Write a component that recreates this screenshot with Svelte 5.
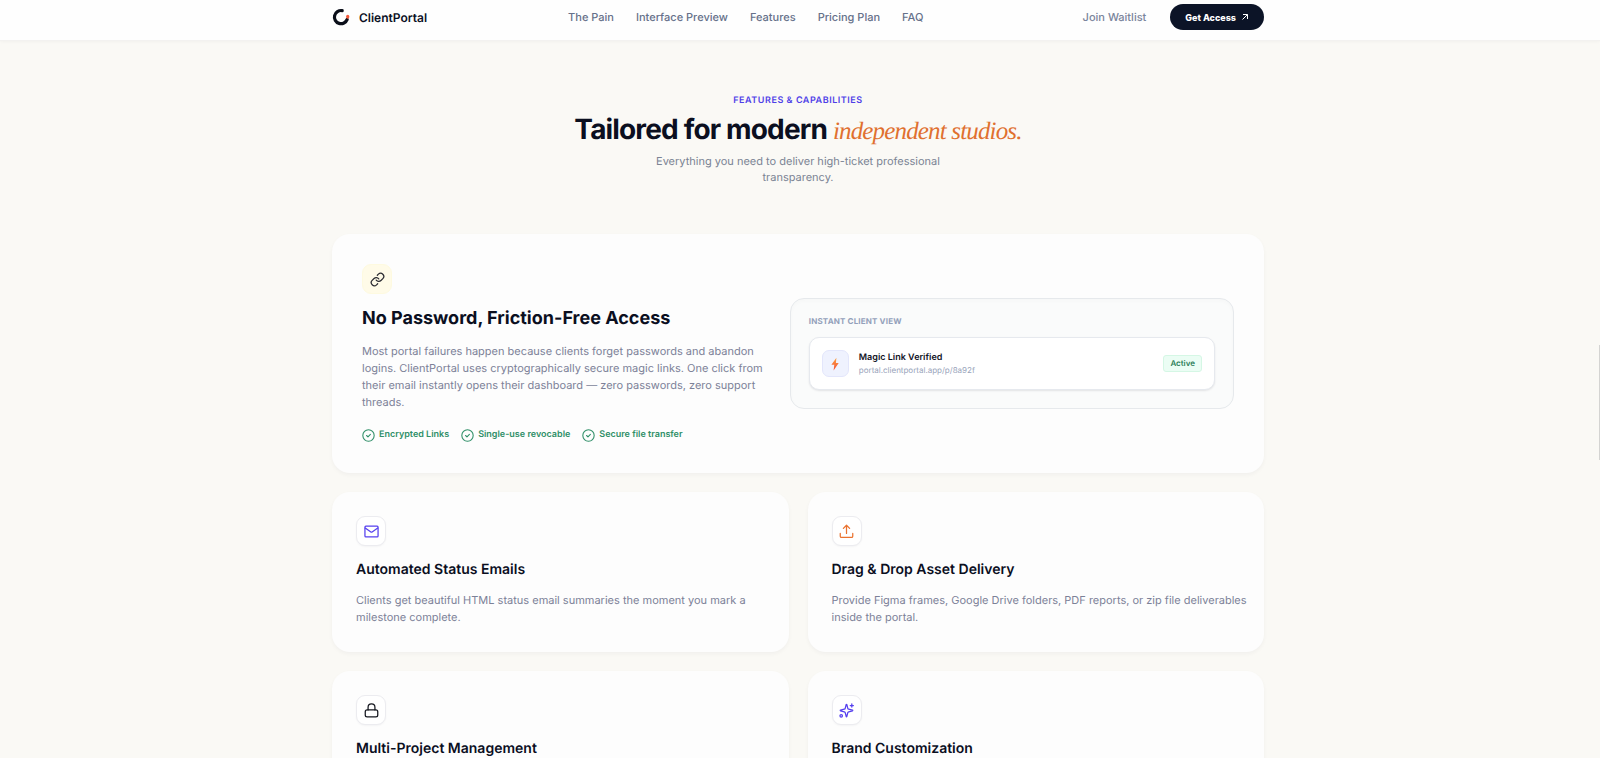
<script lang="ts">
  type Icon = 'mail' | 'upload' | 'lock' | 'sparkles';

  const navLinks = ['The Pain', 'Interface Preview', 'Features', 'Pricing Plan', 'FAQ'];
  const perks = ['Encrypted Links', 'Single-use revocable', 'Secure file transfer'];

  const features: { icon: Icon; title: string; text?: string }[] = [
    {
      icon: 'mail',
      title: 'Automated Status Emails',
      text: 'Clients get beautiful HTML status email summaries the moment you mark a milestone complete.',
    },
    {
      icon: 'upload',
      title: 'Drag & Drop Asset Delivery',
      text: 'Provide Figma frames, Google Drive folders, PDF reports, or zip file deliverables inside the portal.',
    },
    { icon: 'lock', title: 'Multi-Project Management' },
    { icon: 'sparkles', title: 'Brand Customization' },
  ];
</script>

<div class="page">
  <header class="topbar">
    <div class="container topbar-inner">
      <a class="brand" href="#top">
        <svg width="18" height="18" viewBox="0 0 18 18" fill="none" stroke-width="3.2" stroke-linecap="round">
          <path d="M10.200 2.600A6.600 6.600 0 1 0 15.200 11.400" stroke="#0b0f1a" />
          <path d="M15.700 8.300v.8" stroke="#f4593a" />
        </svg>
        <span>ClientPortal</span>
      </a>
      <nav>
        {#each navLinks as label}
          <a href="#{label.toLowerCase().replaceAll(' ', '-')}">{label}</a>
        {/each}
      </nav>
      <div class="actions">
        <a href="#waitlist">Join Waitlist</a>
        <button class="cta" type="button">
          Get Access
          <svg width="8" height="8" viewBox="0 0 8 8" fill="none" stroke="currentColor" stroke-width="1">
            <path d="M1.5 6.5l5-5M2 1.5h4.5V6" />
          </svg>
        </button>
      </div>
    </div>
  </header>

  <main class="container">
    <div class="intro">
      <p class="eyebrow">Features &amp; Capabilities</p>
      <h2>Tailored for modern <em>independent studios.</em></h2>
      <p class="lead">Everything you need to deliver high-ticket professional transparency.</p>
    </div>

    <div class="grid">
      <section class="card wide">
        <div>
          <div class="icon-box cream">
            <svg class="icon" viewBox="0 0 24 24">
              <path d="M10 13a5 5 0 0 0 7.54.54l3-3a5 5 0 0 0-7.07-7.07l-1.72 1.71" />
              <path d="M14 11a5 5 0 0 0-7.54-.54l-3 3a5 5 0 0 0 7.07 7.07l1.71-1.71" />
            </svg>
          </div>
          <h3>No Password, Friction-Free Access</h3>
          <p class="text">
            Most portal failures happen because clients forget passwords and abandon logins. ClientPortal uses
            cryptographically secure magic links. One click from their email instantly opens their dashboard — zero
            passwords, zero support threads.
          </p>
          <ul class="perks">
            {#each perks as perk}
              <li>
                <svg width="13" height="13" viewBox="0 0 24 24" fill="none" stroke="currentColor" stroke-width="2" stroke-linecap="round" stroke-linejoin="round">
                  <circle cx="12" cy="12" r="10.5" />
                  <path d="M8.5 12l2.5 2.5 4.5-4.5" />
                </svg>
                {perk}
              </li>
            {/each}
          </ul>
        </div>

        <div class="preview">
          <p class="preview-label">Instant Client View</p>
          <div class="link-card">
            <div class="bolt">
              <svg width="8" height="14" viewBox="0 0 8 14">
                <defs>
                  <linearGradient id="bolt-fill" x1="0" y1="0" x2="0" y2="1">
                    <stop offset="0" stop-color="#fba13c" />
                    <stop offset="1" stop-color="#f4503c" />
                  </linearGradient>
                </defs>
                <path d="M5.400.8L.4 7.800h2.900L2.600 13.400l5.100-7.400H4.900z" fill="url(#bolt-fill)" />
              </svg>
            </div>
            <div class="link-info">
              <strong>Magic Link Verified</strong>
              <span>portal.clientportal.app/p/8a92f</span>
            </div>
            <span class="badge">Active</span>
          </div>
        </div>
      </section>

      {#each features as feature}
        <section class="card">
          <div class="icon-box {feature.icon}">
            <svg class="icon" viewBox="0 0 24 24">
              {#if feature.icon === 'mail'}
                <rect x="1.5" y="3.5" width="21" height="17" rx="1.5" />
                <path d="M22 6.500l-8.970 6.200a1.940 1.940 0 0 1-2.060 0L2 6.500" />
              {:else if feature.icon === 'upload'}
                <path d="M22 15v4.500a2 2 0 0 1-2 2H4a2 2 0 0 1-2-2V15" />
                <path d="M17 7l-5-5-5 5M12 2v13" />
              {:else if feature.icon === 'lock'}
                <rect x="2" y="11" width="20" height="11" rx="3" />
                <path d="M6.500 11V7a5.500 5.500 0 0 1 11 0v4" />
              {:else}
                <path d="M9.940 15.500A2 2 0 0 0 8.500 14.060l-6.140-1.580a.5.5 0 0 1 0-.96L8.500 9.940A2 2 0 0 0 9.940 8.500l1.580-6.140a.5.5 0 0 1 .96 0L14.060 8.500A2 2 0 0 0 15.500 9.940l6.140 1.580a.5.5 0 0 1 0 .96L15.500 14.060a2 2 0 0 0-1.440 1.440l-1.580 6.140a.5.5 0 0 1-.96 0z" />
                <path d="M20.500 1.500v5M23 4h-5" />
                <circle cx="3.500" cy="20.500" r="2" />
              {/if}
            </svg>
          </div>
          <h4>{feature.title}</h4>
          {#if feature.text}
            <p class="text">{feature.text}</p>
          {/if}
        </section>
      {/each}
    </div>
  </main>

  <div class="scroll-thumb"></div>
</div>

<style>
  :global(body) {
    background: #faf9f5;
  }

  .page {
    position: relative;
    height: 100vh;
    overflow: hidden;
    font-family: Inter, 'Liberation Sans', sans-serif;
    font-size: 11px;
    color: #0b0f1f;
    text-rendering: geometricPrecision;
  }

  h2, h3, h4, p, ul {
    margin: 0;
  }

  a {
    color: inherit;
    text-decoration: none;
  }

  .container {
    width: calc(100% - 48px);
    max-width: 932px;
    margin: 0 auto;
  }

  .topbar {
    padding: 4px 4px 10px 0;
    background: #fefefe;
    border-bottom: 1px solid #f3f2f0;
    box-shadow: 0 1px 3px rgba(15, 23, 42, 0.03);
  }

  .topbar-inner {
    display: flex;
    align-items: center;
  }

  .brand {
    display: flex;
    align-items: center;
    gap: 9px;
    font-size: 12px;
    font-weight: 600;
  }

  nav {
    display: flex;
    gap: 22px;
    margin-left: 141px;
    font-weight: 500;
    color: #66718a;
  }

  .actions {
    display: flex;
    align-items: center;
    gap: 24px;
    margin-left: auto;
    font-weight: 500;
    color: #7a859c;
  }

  .cta {
    display: flex;
    align-items: center;
    gap: 5px;
    height: 26px;
    padding: 0 15px;
    border: none;
    border-radius: 13px;
    background: #0c1427;
    color: #fff;
    font-family: inherit;
    font-size: 9px;
    font-weight: 800;
    cursor: pointer;
  }

  main {
    padding: 53px 4px 0 0;
  }

  .intro {
    display: flex;
    flex-direction: column;
    align-items: center;
    text-align: center;
  }

  .eyebrow {
    font-size: 9px;
    font-weight: 600;
    line-height: 14px;
    text-transform: uppercase;
    letter-spacing: 0.06em;
    color: #4f3fe8;
  }

  h2 {
    margin-top: 3px;
    font-size: 28px;
    font-weight: 700;
    line-height: 36px;
    letter-spacing: -0.03em;
  }

  h2 em {
    font-family: 'Liberation Serif', serif;
    font-size: 25px;
    font-weight: 400;
    color: #e0702f;
  }

  .lead {
    max-width: 300px;
    margin-top: 3px;
    line-height: 16px;
    color: #7b8494;
  }

  .grid {
    display: grid;
    grid-template-columns: 1fr 1fr;
    gap: 19px;
    margin-top: 49px;
  }

  .card {
    min-height: 111px;
    padding: 24px 12px 25px 24px;
    border-radius: 18px;
    background: #fdfdfd;
    box-shadow: 0 2px 4px rgba(15, 23, 42, 0.04);
  }

  .wide {
    grid-column: 1 / -1;
    display: grid;
    grid-template-columns: minmax(0, 10fr) minmax(0, 11fr);
    gap: 24px;
    align-items: center;
    padding: 30px;
  }

  .icon-box {
    display: flex;
    align-items: center;
    justify-content: center;
    box-sizing: border-box;
    width: 30px;
    height: 30px;
    border: 1px solid #ececf0;
    border-radius: 9px;
    background: #fff;
    box-shadow: 0 1px 2px rgba(15, 23, 42, 0.04);
  }

  .icon {
    width: 15px;
    height: 15px;
    fill: none;
    stroke: currentColor;
    stroke-width: 2;
    stroke-linecap: round;
    stroke-linejoin: round;
  }

  .cream {
    border-color: #fefae0;
    background: #fffbe8;
    box-shadow: none;
    color: #2a2a30;
  }

  .mail, .sparkles {
    color: #5640ee;
  }

  .upload {
    color: #ea7330;
  }

  .lock {
    color: #15171f;
  }

  h3 {
    margin-top: 13px;
    font-size: 18px;
    font-weight: 700;
    line-height: 24px;
    font-optical-sizing: none;
  }

  h4 {
    margin-top: 14px;
    font-size: 14px;
    font-weight: 600;
    line-height: 20px;
  }

  .text {
    margin-top: 12px;
    line-height: 17px;
    color: #7c8198;
  }

  .perks {
    display: flex;
    gap: 12px;
    margin-top: 16px;
    padding: 0;
    list-style: none;
    font-size: 9px;
    font-weight: 600;
    line-height: 16px;
    color: #2f8f68;
  }

  .perks li {
    display: flex;
    align-items: center;
    gap: 4px;
    white-space: nowrap;
  }

  .preview {
    padding: 16px 18px 18px;
    border: 1px solid #e6e9ec;
    border-radius: 14px;
    background: #fafbfb;
    box-shadow: inset 0 2px 4px rgba(15, 23, 42, 0.02);
  }

  .preview-label {
    font-size: 8px;
    font-weight: 700;
    line-height: 12px;
    text-transform: uppercase;
    letter-spacing: 0.02em;
    color: #93a0ba;
  }

  .link-card {
    display: flex;
    align-items: center;
    gap: 10px;
    margin-top: 10px;
    padding: 12px;
    border: 1px solid #e6e9ee;
    border-radius: 10px;
    background: #fff;
    box-shadow: 0 1px 2px rgba(15, 23, 42, 0.1);
  }

  .bolt {
    display: flex;
    align-items: center;
    justify-content: center;
    box-sizing: border-box;
    width: 27px;
    height: 27px;
    border: 1px solid #e3e6fb;
    border-radius: 7px;
    background: #eff2fe;
  }

  .link-info {
    display: flex;
    flex-direction: column;
    font-size: 8px;
    line-height: 13px;
    color: #98a3ba;
  }

  .link-info strong {
    font-size: 9px;
    font-weight: 600;
    color: #12141f;
  }

  .badge {
    margin-left: auto;
    padding: 1px 6px;
    border: 1px solid #d5f7e5;
    border-radius: 3px;
    background: #ebfdf4;
    font-size: 8px;
    font-weight: 600;
    line-height: 13px;
    color: #2b7d58;
  }

  .scroll-thumb {
    position: absolute;
    top: 345px;
    right: 0;
    width: 1px;
    height: 115px;
    background: #d4d4d2;
  }
</style>
